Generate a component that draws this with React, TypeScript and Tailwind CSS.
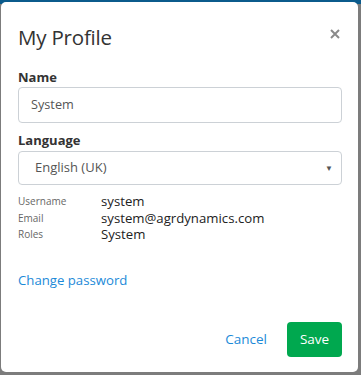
import React from 'react';

const rows = [
  { label: 'Username', value: 'system' },
  { label: 'Email', value: 'system@agrdynamics.com' },
  { label: 'Roles', value: 'System' },
];

const App = () => {
  return (
    <div
      className="w-[361px] h-[375px] pt-[2px] pl-px pr-[3px] pb-[3px] bg-[linear-gradient(#0b5b8c_0,#0b5b8c_4px,#7c7c7c_4px)]"
      style={{ fontFamily: '"Open Sans", "Noto Sans", sans-serif' }}
    >
      <div className="h-full rounded-[5px] bg-white flex flex-col pl-[17px] pr-[16px]">
        {/* Header */}
        <div className="flex items-start justify-between pt-[21px]">
          <h2 className="text-[20.5px] leading-[28px] text-[#333] font-normal tracking-[-0.2px]">My Profile</h2>
          <button type="button" className="mt-[3px] mr-[-1px] w-[16px] h-[16px] grid place-items-center">
            <svg viewBox="0 0 10 10" className="w-[10px] h-[10px]" stroke="#8a8a8a" strokeWidth="2">
              <path d="M1 1L9 9M9 1L1 9" />
            </svg>
          </button>
        </div>

        {/* Name */}
        <label className="mt-[17px] text-[13px] leading-[18px] font-bold text-[#333]">Name</label>
        <div className="mt-px h-[36px] rounded-[4px] border border-[#ccd1d6] flex items-center pl-[12px] text-[12.7px] text-[#555]">
          System
        </div>

        {/* Language */}
        <label className="mt-[8px] text-[13px] leading-[18px] font-bold text-[#333]">Language</label>
        <div className="mt-[2px] h-[34px] rounded-[4px] border border-[#ccd1d6] flex items-center justify-between pl-[16px] pr-[8px] text-[13px] text-[#555]">
          <span>English (UK)</span>
          <span className="text-[8px] text-[#555]">▼</span>
        </div>

        {/* Details */}
        <div className="mt-[8px] flex flex-col">
          {rows.map((row) => (
            <div key={row.label} className="flex items-center h-[16.5px]">
              <span className="w-[83px] text-[10px] leading-[14px] text-[#666]">{row.label}</span>
              <span className="text-[13.2px] leading-[16px] text-[#222]">{row.value}</span>
            </div>
          ))}
        </div>

        <a href="#" className="mt-[28px] self-start text-[13.2px] leading-[18px] text-[#1c8ad8]">
          Change password
        </a>

        {/* Footer */}
        <div className="mt-auto mb-[15px] flex items-center justify-end gap-[20px]">
          <button type="button" className="text-[13.5px] text-[#1c8ad8]">
            Cancel
          </button>
          <button
            type="button"
            className="h-[35px] w-[55px] rounded-[4px] bg-[#00a84f] text-white text-[13.5px]"
          >
            Save
          </button>
        </div>
      </div>
    </div>
  );
};

export default App;
